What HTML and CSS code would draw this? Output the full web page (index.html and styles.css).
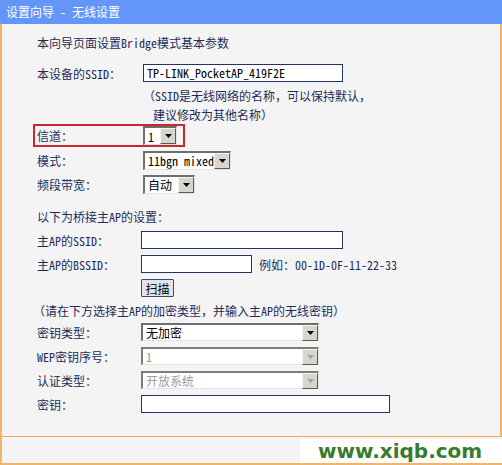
FILE: index.html
```html
<!DOCTYPE html>
<html lang="zh-CN">
<head>
    <meta charset="UTF-8">
    <title>设置向导 - 无线设置</title>
    <link rel="stylesheet" href="styles.css">
</head>
<body>
    <div class="wizard">
        <div class="wizard-title">设置向导 - 无线设置</div>

        <div class="wizard-body">
            <div class="row intro">本向导页面设置Bridge模式基本参数</div>

            <!-- local device -->
            <div class="row gap-top">
                <span class="label">本设备的SSID：</span>
                <span class="field w200">TP-LINK_PocketAP_419F2E</span>
            </div>
            <div class="note">
                <div>（SSID是无线网络的名称，可以保持默认，</div>
                <div class="indent">建议修改为其他名称）</div>
            </div>

            <div class="row highlight">
                <span class="label">信道：</span>
                <span class="select w34"><span class="val">1</span><span class="arrow"><svg width="7" height="4" viewBox="0 0 7 4"><path d="M0 0h7L3.5 4z"/></svg></span></span>
            </div>
            <div class="row">
                <span class="label">模式：</span>
                <span class="select w88"><span class="val">11bgn mixed</span><span class="arrow"><svg width="7" height="4" viewBox="0 0 7 4"><path d="M0 0h7L3.5 4z"/></svg></span></span>
            </div>
            <div class="row">
                <span class="label">频段带宽：</span>
                <span class="select w52"><span class="val">自动</span><span class="arrow"><svg width="7" height="4" viewBox="0 0 7 4"><path d="M0 0h7L3.5 4z"/></svg></span></span>
            </div>

            <!-- root AP -->
            <div class="row heading">以下为桥接主AP的设置：</div>
            <div class="row narrow">
                <span class="label">主AP的SSID：</span>
                <span class="field w202"></span>
            </div>
            <div class="row narrow">
                <span class="label">主AP的BSSID：</span>
                <span class="field w111"></span>
                <span class="hint">例如：00-1D-0F-11-22-33</span>
            </div>
            <div class="row narrow scan-row">
                <span class="label"></span>
                <button class="btn">扫描</button>
            </div>
            <div class="row tip">（请在下方选择主AP的加密类型，并输入主AP的无线密钥）</div>

            <div class="row narrow">
                <span class="label">密钥类型：</span>
                <span class="select w178"><span class="val">无加密</span><span class="arrow"><svg width="7" height="4" viewBox="0 0 7 4"><path d="M0 0h7L3.5 4z"/></svg></span></span>
            </div>
            <div class="row narrow">
                <span class="label">WEP密钥序号：</span>
                <span class="select w178 disabled"><span class="val">1</span><span class="arrow"><svg width="7" height="4" viewBox="0 0 7 4"><path d="M0 0h7L3.5 4z"/></svg></span></span>
            </div>
            <div class="row narrow">
                <span class="label">认证类型：</span>
                <span class="select w178 disabled"><span class="val">开放系统</span><span class="arrow"><svg width="7" height="4" viewBox="0 0 7 4"><path d="M0 0h7L3.5 4z"/></svg></span></span>
            </div>
            <div class="row narrow">
                <span class="label">密钥：</span>
                <span class="field w249"></span>
            </div>
        </div>

        <div class="wizard-foot">
            <span class="watermark">www.xiqb.com</span>
        </div>
    </div>
</body>
</html>
```

FILE: styles.css
```css
/* Router wizard page, classic TP-Link look */
body {
    margin: 0;
    background: #f4f4f4;
}
.wizard {
    width: 502px;
    height: 465px;
    display: flex;
    flex-direction: column;
    font-family: "Noto Sans Mono CJK SC", "Noto Sans CJK SC", monospace;
    font-size: 12px;
    color: #1f2c58;
    overflow: hidden;
}
.wizard-title {
    height: 24px;
    line-height: 24px;
    padding-left: 6px;
    background: #6396f8;
    color: white;
}
.wizard-body {
    height: 413px;
    box-sizing: border-box;
    padding: 6px 0 0 35px;
    border-left: 2px solid #f2b466;
    border-right: 2px solid #f2b466;
    border-bottom: 1px solid #f2a85a;
    background: #f4f4f4;
}
.row {
    display: flex;
    align-items: center;
    height: 24px;
}
.label {
    width: 106px;
    flex-shrink: 0;
}
.gap-top {
    margin-top: 7px;
}
.note {
    padding-left: 106px;
    line-height: 19px;
    margin-top: 1px;
}
.note .indent {
    padding-left: 10px;
}
.highlight {
    width: 146px;
    height: 19px;
    margin-left: -4px;
    padding-left: 2px;
    border: 2px solid #c62a2e;
    margin-bottom: 1px;
}
.heading {
    margin-top: 8px;
}
.narrow .label {
    width: 104px;
}
.scan-row {
    height: 23px;
}
.tip {
    margin-left: -4px;
    height: 22px;
}
.tip + .row {
    margin-top: -1px;
}

/* text boxes */
.field {
    box-sizing: border-box;
    height: 18px;
    line-height: 16px;
    padding-left: 3px;
    background: white;
    border: 1px solid #24335f;
    color: black;
}
.w200 { width: 200px; }
.w202 { width: 202px; }
.w111 { width: 111px; }
.w249 { width: 249px; }
.hint {
    margin-left: 7px;
}

/* drop-down boxes */
.select {
    box-sizing: border-box;
    display: flex;
    align-items: center;
    height: 19px;
    background: white;
    border-top: 2px solid #6e6e6e;
    border-left: 2px solid #6e6e6e;
    border-right: 1px solid #e4e4e4;
    border-bottom: 1px solid #e4e4e4;
    color: black;
}
.select .val {
    flex: 1;
    padding-left: 3px;
    white-space: nowrap;
    overflow: hidden;
}
.select .arrow {
    box-sizing: border-box;
    width: 16px;
    height: 16px;
    display: flex;
    align-items: center;
    justify-content: center;
    background: #d8d6cc;
    border-top: 1px solid #f4f4f4;
    border-left: 1px solid #f4f4f4;
    border-right: 1px solid #5a5a5a;
    border-bottom: 1px solid #5a5a5a;
}
.select .arrow svg {
    fill: black;
}
.w34 { width: 34px; }
.w88 { width: 88px; }
.w52 { width: 52px; }
.w178 { width: 178px; height: 18px; }
.select.disabled {
    border-top-color: #7c7c7c;
    border-left-color: #7c7c7c;
}
.select.disabled .val {
    color: #9a9a9a;
}
.select.disabled .arrow svg {
    fill: #a0a0a0;
}

.btn {
    height: 18px;
    width: 33px;
    padding: 0;
    font: inherit;
    color: black;
    background: #e4e4ee;
    border: 1px solid #3c4a70;
    border-radius: 1px;
}

/* bottom strip with watermark */
.wizard-foot {
    flex: 1;
    display: flex;
    justify-content: flex-end;
    border-left: 2px solid #f2b466;
    border-bottom: 2px solid #f2b466;
    background: #f4f4f4;
}
.watermark {
    width: 202px;
    margin-top: 2px;
    padding-left: 18px;
    box-sizing: border-box;
    background: white;
    font-family: "DejaVu Sans", sans-serif;
    font-weight: bold;
    font-size: 20px;
    line-height: 24px;
    color: #3a7a2e;
}
```
